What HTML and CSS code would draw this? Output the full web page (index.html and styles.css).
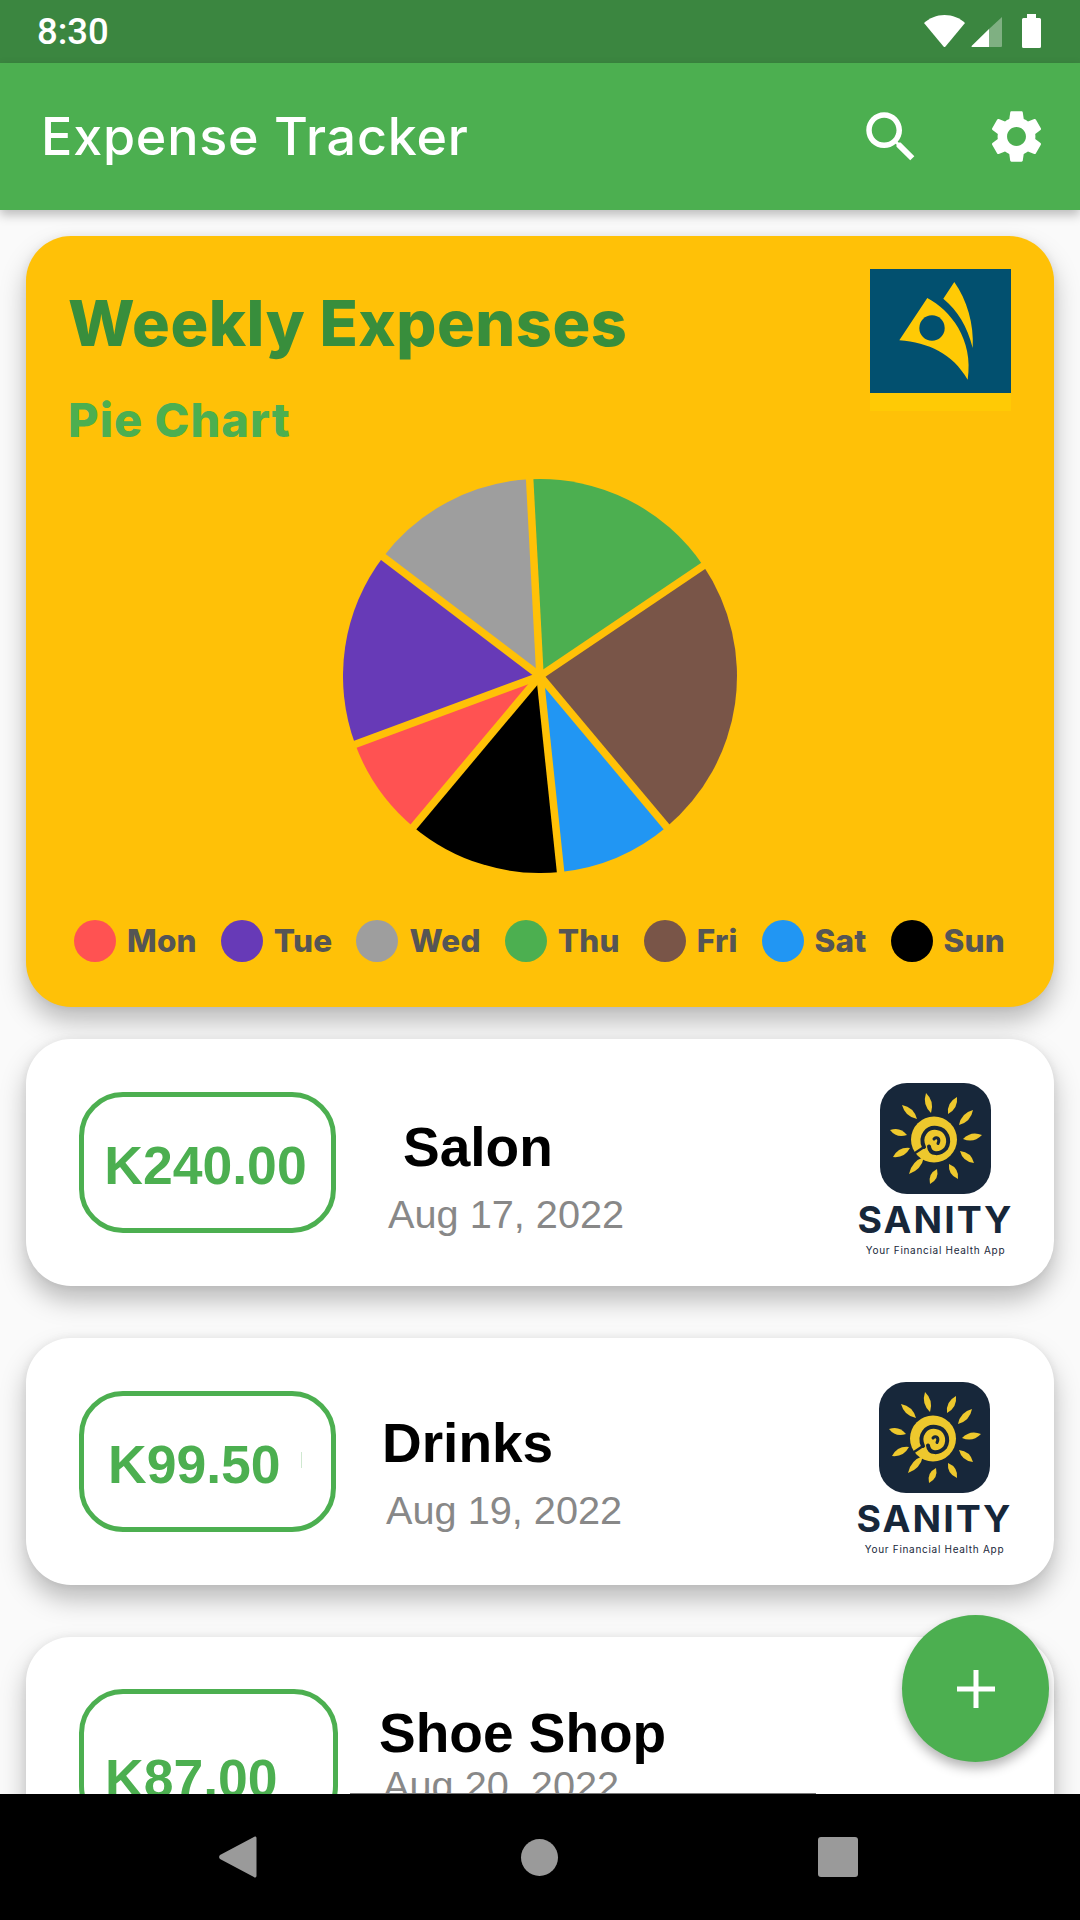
FILE: index.html
```html
<!DOCTYPE html>
<html lang="en">
<head>
<meta charset="utf-8">
<title>Expense Tracker</title>
<link rel="stylesheet" href="styles.css">
</head>
<body>
<svg class="defs" width="0" height="0" aria-hidden="true">
  <defs>
    <g id="sun">
      <circle cx="54" cy="56.500" r="23" fill="#eec82d"/>
      <g fill="none" stroke="#17273a" stroke-linecap="round">
        <path d="M44 64C39 53 47 43.500 57 45 67 46.500 71 57 66 65.500 60 72 50 72 49 63.500" stroke-width="4"/>
        <path d="M54 56C56.500 53 60.500 55.500 58 60.500" stroke-width="3"/>
        <path d="M35 70L44 64" stroke-width="2.500"/>
      </g>
      <g fill="#eec82d">
        <path d="M46 10Q42.200 21.600 51 30Q54.800 18.400 46 10z"/>
        <path d="M77 14Q66.700 19.500 68 31Q78.300 25.500 77 14z"/>
        <path d="M93 27Q81.200 30.100 79 42Q90.800 38.900 93 27z"/>
        <path d="M102 52Q91.200 47.600 83 56Q93.800 60.400 102 52z"/>
        <path d="M94 80Q91.200 69.100 80 68Q82.800 78.900 94 80z"/>
        <path d="M78 96Q79.100 85.200 69 81Q67.900 91.800 78 96z"/>
        <path d="M50 101Q59.400 96.200 57 86Q47.600 90.800 50 101z"/>
        <path d="M29 91Q41.400 86.800 44 74Q31.600 78.200 29 91z"/>
        <path d="M13 74Q24.500 75.300 30 65Q18.500 63.700 13 74z"/>
        <path d="M10 47Q16.700 55.700 27 52Q20.300 43.300 10 47z"/>
        <path d="M22 22Q25.100 33.700 37 36Q33.900 24.300 22 22z"/>
      </g>
    </g>
  </defs>
</svg>
<main class="phone">
  <header class="status">
    <span class="time">8:30</span>
    <div class="status-icons">
      <svg class="wifi" viewBox="0 0 41 32"><path d="M0 8C5.500 3 12.500 0 20.500 0S36 3 41 8L21.500 31.500a1.300 1.300 0 0 1-2 0z" fill="#fff"/></svg>
      <svg class="signal" viewBox="0 0 31 31"><path d="M31 1v29a1 1 0 0 1-1 1H18V13z" fill="#fff" fill-opacity=".35"/><path d="M18 13v18H1a.6.6 0 0 1-.4-1z" fill="#fff"/></svg>
      <svg class="battery" viewBox="0 0 19 34"><path d="M5 0h9v4h3.500A1.500 1.500 0 0 1 19 5.500v27a1.500 1.500 0 0 1-1.500 1.500h-16A1.500 1.500 0 0 1 0 32.500v-27A1.500 1.500 0 0 1 1.500 4H5z" fill="#fff"/></svg>
    </div>
  </header>
  <div class="appbar">
    <h1 class="app-title">Expense Tracker</h1>
    <svg class="action action-search" viewBox="0 0 24 24"><path fill="#fff" d="M15.500 14h-.79l-.28-.27C15.410 12.590 16 11.110 16 9.500 16 5.910 13.090 3 9.500 3S3 5.910 3 9.500 5.910 16 9.500 16c1.610 0 3.090-.59 4.230-1.570l.27.28v.79l5 4.990L20.490 19l-4.990-5zm-6 0C7.010 14 5 11.990 5 9.500S7.010 5 9.500 5 14 7.010 14 9.500 11.990 14 9.500 14z"/></svg>
    <svg class="action action-gear" viewBox="0 0 24 24"><path fill="#fff" d="M19.140 12.940c.04-.3.06-.61.06-.94 0-.32-.02-.64-.07-.94l2.030-1.580c.18-.14.23-.41.12-.61l-1.920-3.320c-.12-.22-.37-.29-.59-.22l-2.390.96c-.5-.38-1.030-.7-1.620-.94l-.36-2.540c-.04-.24-.24-.41-.48-.41h-3.840c-.24 0-.43.17-.47.41l-.36 2.540c-.59.24-1.130.57-1.620.94l-2.390-.96c-.22-.08-.47 0-.59.22L2.740 8.870c-.12.21-.08.47.12.61l2.030 1.580c-.05.3-.09.63-.09.94s.02.64.07.94l-2.030 1.580c-.18.14-.23.41-.12.61l1.920 3.320c.12.22.37.29.59.22l2.390-.96c.5.38 1.030.7 1.620.94l.36 2.540c.05.24.24.41.48.41h3.840c.24 0 .44-.17.47-.41l.36-2.540c.59-.24 1.130-.56 1.620-.94l2.390.96c.22.08.47 0 .59-.22l1.920-3.320c.12-.22.07-.47-.12-.61l-2.010-1.580zM12 15.600c-1.980 0-3.600-1.620-3.600-3.600s1.620-3.600 3.600-3.600 3.600 1.620 3.600 3.600-1.620 3.600-3.600 3.600z"/></svg>
  </div>
  <div class="content">
    <section class="chart-card">
      <div class="chart-head">
        <div class="chart-titles">
          <h2 class="chart-title">Weekly Expenses</h2>
          <p class="chart-sub">Pie Chart</p>
        </div>
        <div class="brand">
          <svg class="brand-mark" viewBox="0 0 141 124">
            <rect width="141" height="124" fill="#02506f"/>
            <path d="M57.300 29C80 41 104 70 97.700 110.700 82 84 59 74 29.300 71.300z" fill="#ffca05"/>
            <path d="M84.300 13C97 31 104 55 102.700 79 97 57 88 42 73.300 29.700z" fill="#ffca05"/>
            <circle cx="62" cy="59" r="12.700" fill="#02506f"/>
          </svg>
          <div class="brand-band"></div>
        </div>
      </div>
      <svg class="pie" viewBox="-197 -197 394 394">
        <path d="M0 0L-10.300-196.700A197 197 0 0 1 163.300-110.200z" fill="#4caf50"/>
        <path d="M0 0L163.300-110.200A197 197 0 0 1 126.600 150.900z" fill="#795548"/>
        <path d="M0 0L126.600 150.900A197 197 0 0 1 20.600 195.900z" fill="#2196f3"/>
        <path d="M0 0L20.600 195.900A197 197 0 0 1-126.600 150.900z" fill="#000"/>
        <path d="M0 0L-126.600 150.900A197 197 0 0 1-184.800 68.300z" fill="#ff5252"/>
        <path d="M0 0L-184.800 68.300A197 197 0 0 1-156.900-119.100z" fill="#673ab7"/>
        <path d="M0 0L-156.900-119.100A197 197 0 0 1-10.300-196.700z" fill="#9e9e9e"/>
        <g stroke="#ffc107" stroke-width="7.500">
          <path d="M0 0L-10.400-198"/><path d="M0 0L164.500-111"/><path d="M0 0L127.500 152"/>
          <path d="M0 0L20.800 198"/><path d="M0 0L-127.500 152"/><path d="M0 0L-186 68.800"/><path d="M0 0L-158-120"/>
        </g>
      </svg>
      <ul class="legend">
        <li class="legend-item"><span class="dot dot-mon"></span>Mon</li>
        <li class="legend-item"><span class="dot dot-tue"></span>Tue</li>
        <li class="legend-item"><span class="dot dot-wed"></span>Wed</li>
        <li class="legend-item"><span class="dot dot-thu"></span>Thu</li>
        <li class="legend-item"><span class="dot dot-fri"></span>Fri</li>
        <li class="legend-item"><span class="dot dot-sat"></span>Sat</li>
        <li class="legend-item"><span class="dot dot-sun"></span>Sun</li>
      </ul>
    </section>

    <article class="expense expense-salon">
      <div class="amount"><span>K240.00</span></div>
      <div class="info">
        <div class="name">Salon</div>
        <div class="date">Aug 17, 2022</div>
      </div>
      <div class="sanity">
        <svg class="sanity-mark" viewBox="0 0 111 111"><rect width="111" height="111" rx="27" fill="#17273a"/><use href="#sun"/></svg>
        <div class="sanity-name">SANITY</div>
        <div class="sanity-tag">Your Financial Health App</div>
      </div>
    </article>

    <article class="expense expense-drinks">
      <div class="amount"><span>K99.50</span><i class="amount-tick"></i></div>
      <div class="info">
        <div class="name">Drinks</div>
        <div class="date">Aug 19, 2022</div>
      </div>
      <div class="sanity">
        <svg class="sanity-mark" viewBox="0 0 111 111"><rect width="111" height="111" rx="27" fill="#17273a"/><use href="#sun"/></svg>
        <div class="sanity-name">SANITY</div>
        <div class="sanity-tag">Your Financial Health App</div>
      </div>
    </article>

    <article class="expense expense-shoes">
      <div class="amount"><span>K87.00</span></div>
      <div class="info">
        <div class="name">Shoe Shop</div>
        <div class="date">Aug 20, 2022</div>
      </div>
    </article>
  </div>
  <button class="fab" type="button" aria-label="Add expense">
    <svg viewBox="0 0 38 38"><path d="M19 0v38M0 19h38" stroke="#fff" stroke-width="5" fill="none"/></svg>
  </button>
  <nav class="navbar">
    <i class="nav-edge"></i>
    <svg class="nav-back" viewBox="0 0 38 42"><path d="M37.500 2v38a1.500 1.500 0 0 1-2.600 1L1 23a3 3 0 0 1 0-4L34.900 1a1.500 1.500 0 0 1 2.600 1z" fill="#9a9a9a"/></svg>
    <span class="nav-home"></span>
    <span class="nav-recent"></span>
  </nav>
</main>
</body>
</html>
```
FILE: styles.css
```css
* { box-sizing: border-box; }
html, body { margin: 0; padding: 0; }
body { font-family: "Liberation Sans", Arial, sans-serif; background: #fafafa; }
.defs { position: absolute; }
.phone { position: relative; width: 1080px; height: 1920px; display: flex; flex-direction: column; overflow: hidden; background: #fafafa; }

.status { flex: 0 0 63px; background: #3b8640; display: flex; align-items: center; justify-content: space-between; padding: 0 39px 0 37px; color: #fff; }
.time { font: 500 36.500px Roboto, sans-serif; }
.status-icons { display: flex; align-items: center; }
.wifi { width: 41px; height: 32px; margin-right: 6px; margin-top: -2px; }
.signal { width: 31px; height: 31px; margin-right: 20px; }
.battery { width: 19px; height: 34px; margin-top: -1px; }

.appbar { flex: 0 0 147px; position: relative; z-index: 2; background: #4caf50; display: flex; align-items: center; padding: 0 32px 0 41px; box-shadow: 0 5px 10px rgba(0,0,0,.25); }
.app-title { flex: 1; margin: 0; color: #fff; font: 500 52px Inter, sans-serif; letter-spacing: .8px; }
.action { display: block; }
.action-search { width: 66px; height: 66px; margin-right: 61px; }
.action-gear { width: 63px; height: 63px; }

.content { flex: 1; min-height: 0; overflow: hidden; padding: 26px 26px 0; display: flex; flex-direction: column; }

.chart-card { flex: none; height: 771px; background: #ffc107; border-radius: 45px; padding: 33px 43px 0 42px; box-shadow: 0 14px 26px rgba(0,0,0,.26), 0 0 8px rgba(0,0,0,.06); display: flex; flex-direction: column; }
.chart-head { display: flex; justify-content: space-between; height: 210px; }
.chart-titles { padding-top: 18px; }
.chart-title { margin: 0; font: 800 63px/72px Inter, sans-serif; color: #388e3c; letter-spacing: .5px; }
.chart-sub { margin: 36px 0 0; font: 800 47px/50px Inter, sans-serif; color: #4caf50; letter-spacing: 1px; }
.brand { width: 141px; }
.brand-mark { display: block; width: 141px; height: 124px; }
.brand-band { height: 18px; background: #ffca05; }
.pie { display: block; width: 394px; height: 394px; align-self: center; }
.legend { list-style: none; margin: 47px 0 0 6px; padding: 0; display: flex; }
.legend-item { display: flex; align-items: center; color: #555; font: 800 31.500px/42px Inter, sans-serif; letter-spacing: .2px; margin-right: 24px; }
.dot { width: 42px; height: 42px; border-radius: 50%; margin-right: 11px; }
.dot-mon { background: #ff5252; }
.dot-tue { background: #673ab7; }
.dot-wed { background: #9e9e9e; }
.dot-thu { background: #4caf50; }
.dot-fri { background: #795548; }
.dot-sat { background: #2196f3; }
.dot-sun { background: #000; }

.expense { flex: none; height: 247px; background: #fff; border-radius: 45px; margin-top: 32px; padding-left: 53px; display: flex; align-items: center; position: relative; box-shadow: 0 14px 26px rgba(0,0,0,.26), 0 0 8px rgba(0,0,0,.06); }
.expense-drinks { margin-top: 52px; }
.expense-shoes { margin-top: 52px; }
.amount { flex: none; width: 257px; height: 141px; border: 5px solid #4caf50; border-radius: 44px; padding: 5px 4px 0 0; display: flex; align-items: center; justify-content: center; color: #4caf50; font-weight: 700; font-size: 53.500px; position: relative; }
.amount-tick { position: absolute; left: 217px; top: 56px; width: 1px; height: 16px; background: #cfe8d0; }
.info { margin-left: 52px; flex: 1; padding-top: 27px; }
.name { font-size: 55px; font-weight: 700; line-height: 62px; color: #000; }
.date { font-size: 39.700px; line-height: 46px; margin-top: 13px; color: #888; }
.sanity { flex: none; width: 153px; margin-right: 42px; padding-top: 14px; display: flex; flex-direction: column; align-items: center; color: #17273a; }
.sanity-mark { display: block; width: 111px; height: 111px; }
.sanity-name { font: 700 37.500px/38px Inter, sans-serif; letter-spacing: 2px; white-space: nowrap; margin-top: 7px; }
.sanity-tag { font: 400 10px/14px Inter, sans-serif; letter-spacing: .7px; white-space: nowrap; margin-top: 4px; }

.expense-salon .name { margin-left: 15px; }
.expense-drinks .amount { justify-content: flex-start; padding-left: 24px; padding-right: 0; }
.expense-drinks .info { margin-left: 46px; padding-top: 21px; }
.expense-drinks .date { margin-left: 4px; }
.expense-drinks .sanity { margin-right: 43px; }
.expense-shoes { align-items: flex-start; padding-top: 52px; }
.expense-shoes .amount { width: 259px; justify-content: flex-start; padding-left: 21px; padding-right: 0; }
.expense-shoes .amount span { position: relative; top: 16px; }
.expense-shoes .info { margin-left: 41px; padding-top: 13px; }
.expense-shoes .date { margin-left: 4px; margin-top: -2px; }

.fab { position: absolute; left: 902px; top: 1615px; width: 147px; height: 147px; border: 0; border-radius: 50%; padding: 0; background: #4caf50; box-shadow: 0 6px 12px rgba(0,0,0,.3); display: flex; align-items: center; justify-content: center; }
.fab svg { width: 38px; height: 38px; }

.navbar { flex: 0 0 126px; position: relative; z-index: 1; background: #000; display: flex; align-items: center; padding: 0 222px 0 219px; justify-content: space-between; }
.nav-edge { position: absolute; left: 350px; top: -1px; width: 466px; height: 1px; background: #777; }
.nav-back { width: 38px; height: 42px; }
.nav-home { width: 37px; height: 37px; border-radius: 50%; background: #9a9a9a; margin-left: 4px; }
.nav-recent { width: 40px; height: 40px; border-radius: 3px; background: #9a9a9a; }
```
